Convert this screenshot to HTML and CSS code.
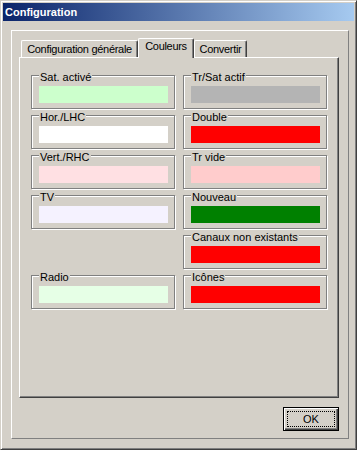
FILE: index.html
```html
<!DOCTYPE html>
<html lang="fr">
<head>
    <meta charset="UTF-8">
    <title>Configuration</title>
    <link rel="stylesheet" href="styles.css">
</head>
<body>

    <div class="window">
        <div class="titlebar">Configuration</div>

        <div class="frame">
            <div class="tabs">
                <div class="tab tab-general">Configuration générale</div>
                <div class="tab tab-colors active">Couleurs</div>
                <div class="tab tab-convert">Convertir</div>
            </div>

            <div class="page">
                <div class="color-grid">
                    <div class="group"><span class="group-label">Sat. activé</span><div class="swatch sat-active"></div></div>
                    <div class="group"><span class="group-label">Tr/Sat actif</span><div class="swatch tr-sat"></div></div>

                    <div class="group"><span class="group-label">Hor./LHC</span><div class="swatch hor"></div></div>
                    <div class="group"><span class="group-label">Double</span><div class="swatch red"></div></div>

                    <div class="group"><span class="group-label">Vert./RHC</span><div class="swatch vert"></div></div>
                    <div class="group"><span class="group-label">Tr vide</span><div class="swatch tr-empty"></div></div>

                    <div class="group"><span class="group-label">TV</span><div class="swatch tv"></div></div>
                    <div class="group"><span class="group-label">Nouveau</span><div class="swatch new"></div></div>

                    <div class="spacer"></div>
                    <div class="group"><span class="group-label">Canaux non existants</span><div class="swatch red"></div></div>

                    <div class="group"><span class="group-label">Radio</span><div class="swatch radio"></div></div>
                    <div class="group"><span class="group-label">Icônes</span><div class="swatch red"></div></div>
                </div>
            </div>

            <div class="buttons">
                <button class="ok"><span class="focus">OK</span></button>
            </div>
        </div>
    </div>

</body>
</html>
```

FILE: styles.css
```css
body {
    margin: 0;
    padding: 0;
    background: #d4d0c8;
    font-family: "Liberation Sans", Arial, sans-serif;
    font-size: 11px;
    color: #000;
}

.window {
    width: 357px;
    height: 450px;
    box-sizing: border-box;
    background: #d4d0c8;
    border: 1px solid;
    border-color: #d4d0c8 #404040 #404040 #d4d0c8;
    box-shadow: inset 1px 1px 0 #fff, inset -1px -1px 0 #808080;
    padding: 2px;
}

.titlebar {
    height: 18px;
    line-height: 18px;
    padding-left: 2px;
    background: linear-gradient(to right, #0a246a, #a6caf0);
    color: white;
    font-weight: bold;
    font-size: 11px;
}

.frame {
    width: 338px;
    height: 409px;
    box-sizing: border-box;
    margin: 9px 0 0 8px;
    border: 1px solid;
    border-color: #fff #808080 #808080 #fff;
    padding: 7px 9px 7px 7px;
}

/* tab strip */

.tabs {
    display: flex;
    align-items: flex-end;
    height: 19px;
    padding-left: 2px;
}

.tab {
    box-sizing: border-box;
    height: 17px;
    line-height: 16px;
    text-align: center;
    letter-spacing: -0.3px;
    border-top: 1px solid #fff;
    border-left: 1px solid #fff;
    border-right: 1px solid #404040;
    border-radius: 2px 2px 0 0;
    box-shadow: inset -1px 0 0 #808080;
    background: #d4d0c8;
}

.tab-general {
    width: 117px;
}

.tab-colors {
    width: 56px;
}

.tab-convert {
    width: 53px;
}

.tab.active {
    position: relative;
    z-index: 1;
    height: 20px;
    margin-bottom: -1px;
    line-height: 15px;
}

/* tab page */

.page {
    height: 341px;
    box-sizing: border-box;
    border: 1px solid;
    border-color: #fff #404040 #404040 #fff;
    box-shadow: inset -1px -1px 0 #808080;
    padding: 17px 11px 0 11px;
}

.color-grid {
    display: grid;
    grid-template-columns: 144px 144px;
    grid-auto-rows: 34px;
    column-gap: 8px;
    row-gap: 6px;
}

.group {
    box-sizing: border-box;
    border: 1px solid #808080;
    box-shadow: 1px 1px 0 #fff, inset 1px 1px 0 #fff;
}

.group-label {
    display: block;
    width: max-content;
    height: 13px;
    line-height: 13px;
    margin: -5px 0 0 7px;
    padding: 0 1px;
    background: #d4d0c8;
}

.swatch {
    width: 129px;
    height: 17px;
    margin: 2px 0 0 7px;
}

.sat-active { background: #ccffcc; }
.tr-sat { background: #b4b4b4; }
.hor { background: #ffffff; }
.red { background: #ff0000; }
.vert { background: #ffe0e3; }
.tr-empty { background: #ffcccc; }
.tv { background: #f5f2ff; }
.new { background: #008000; }
.radio { background: #e6ffe6; }

/* buttons */

.buttons {
    display: flex;
    justify-content: flex-end;
    margin-top: 9px;
}

.ok {
    width: 56px;
    height: 24px;
    box-sizing: border-box;
    padding: 3px;
    margin: 0;
    border: 1px solid #000;
    background: #d4d0c8;
    box-shadow: inset 1px 1px 0 #fff, inset -1px -1px 0 #404040, inset -2px -2px 0 #808080;
    font-family: "Liberation Sans", Arial, sans-serif;
    font-size: 11px;
    color: #000;
}

.focus {
    display: block;
    height: 100%;
    box-sizing: border-box;
    border: 1px dotted #000;
    line-height: 14px;
}
```
